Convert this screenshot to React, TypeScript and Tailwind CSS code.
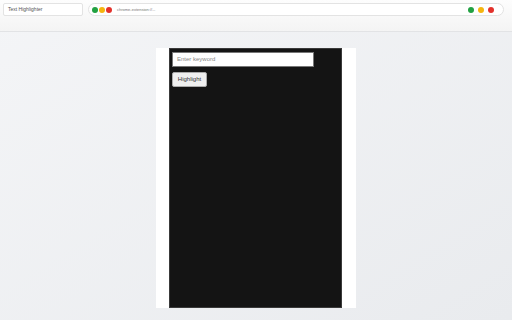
import React from 'react';

const Dot = ({ color }: { color: string }) => (
  <span className={`block w-[6px] h-[6px] rounded-full ${color}`} />
);

export default function App() {
  return (
    <div
      className="w-[512px] h-[320px] flex flex-col bg-gradient-to-br from-[#f4f5f7] to-[#e9ebee] overflow-hidden"
      style={{ fontFamily: '"Liberation Sans", Arial, sans-serif' }}
    >
      {/* browser chrome */}
      <div className="h-[32px] shrink-0 bg-gradient-to-b from-[#fdfdfd] to-[#f4f4f4] border-b border-[#e2e3e5] flex items-start gap-[5px] px-[3px] pt-[3px]">
        <div className="w-[80px] h-[13px] bg-white border border-[#e3e3e3] rounded-[2px] flex items-center px-[4px]">
          <span className="text-[5px] text-[#555] leading-none">Text Highlighter</span>
        </div>
        <div className="w-[416px] h-[13px] bg-white border border-[#e3e3e3] rounded-full flex items-center px-[3px] gap-[1px]">
          <Dot color="bg-[#21a142]" />
          <Dot color="bg-[#f5b50f]" />
          <Dot color="bg-[#e3312b]" />
          <span className="ml-[4px] text-[4px] text-[#777] leading-none">chrome-extension://...</span>
          <div className="ml-auto flex items-center gap-[4px] pr-[6px]">
            <Dot color="bg-[#21a142]" />
            <Dot color="bg-[#f5b50f]" />
            <Dot color="bg-[#e3312b]" />
          </div>
        </div>
      </div>

      {/* page */}
      <div className="flex justify-center pt-[16px]">
        <div className="w-[200px] h-[260px] bg-white flex justify-center pl-[13px] pr-[14px]">
          <div className="flex-1 bg-[#141414] border border-[#3a3a3a] flex flex-col items-start pt-[3px] pl-[2px] gap-[5px]">
            <div className="w-[142px] h-[15px] bg-white border border-[#777] flex items-center px-[4px]">
              <span className="text-[6px] text-[#888]">Enter keyword</span>
            </div>
            <div className="w-[35px] h-[15px] bg-[#efefef] border border-[#aaa] rounded-[2px] flex items-center justify-center">
              <span className="text-[6px] text-[#333]">Highlight</span>
            </div>
          </div>
        </div>
      </div>
    </div>
  );
}
